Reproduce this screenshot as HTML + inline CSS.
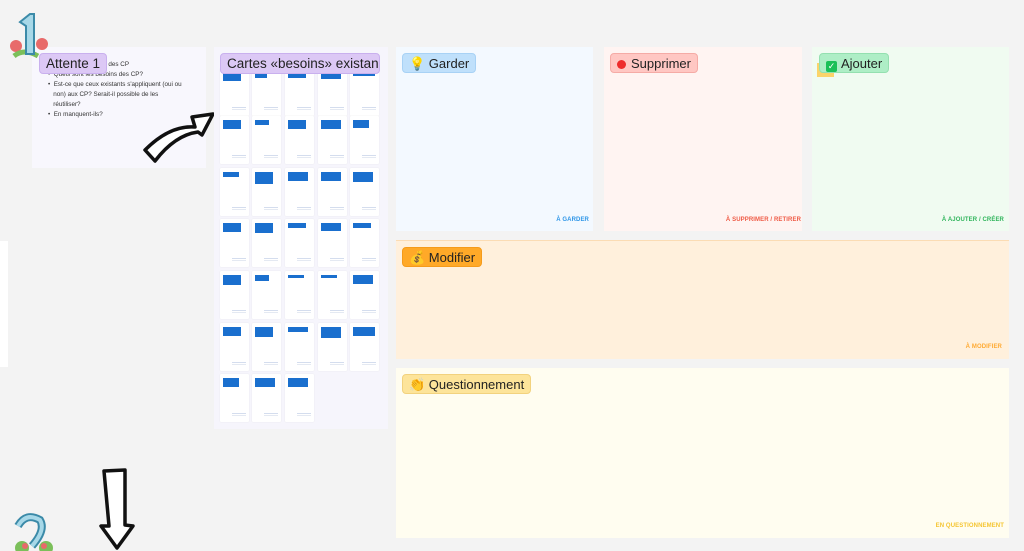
<!DOCTYPE html>
<html><head><meta charset="utf-8"><style>
*{margin:0;padding:0;box-sizing:border-box}
body{width:1024px;height:551px;background:#f3f3f3;position:relative;overflow:hidden;font-family:"Liberation Sans",sans-serif}
.a{position:absolute}
.tag{position:absolute;border-radius:4px;font-size:13px;color:#222;padding:0 6px;height:20px;line-height:20px;white-space:nowrap}
.lbl{position:absolute;font-size:6px;font-weight:bold;right:6px;letter-spacing:.1px}
.card{position:absolute;width:29px;height:48px;background:#fff;border-radius:1px;box-shadow:0 0 1px #ddd}
.card i{position:absolute;left:3px;top:4px;width:18px;height:9px;background:#1a6fce}
.card b{position:absolute;right:3px;bottom:6px;width:14px;height:3px;border-top:1px solid #d4ddee;border-bottom:1px solid #e4e9f2}
</style></head><body>
<div class="a" style="left:32px;top:47px;width:174px;height:121px;background:#f8f7fd"></div>
<div class="a" style="left:48px;top:60px;font-size:6.3px;color:#333;line-height:10px;width:150px">
<div style="padding-left:52px">ns des CP</div>
<div>• &nbsp;Quels sont les besoins des CP?</div>
<div>• &nbsp;Est-ce que ceux existants s'appliquent (oui ou<br>&nbsp;&nbsp;&nbsp;non) aux CP? Serait-il possible de les<br>&nbsp;&nbsp;&nbsp;réutiliser?</div>
<div>• &nbsp;En manquent-ils?</div></div>
<div class="tag" style="left:39px;top:53px;background:#dcc8f5;border:1px solid #c9b0ee;font-size:13.5px;height:21px">Attente 1</div>
<svg class="a" style="left:4px;top:10px" width="46" height="50"><circle cx="12" cy="36" r="6" fill="#e86a6a"/><circle cx="38" cy="34" r="6" fill="#e86a6a"/><path d="M10 46 Q20 38 34 46" stroke="#7bbf5a" stroke-width="5" fill="none"/><path d="M16 12 L26 4 L30 4 L30 44 L22 44 L22 16 Z" fill="#a7d8e8" stroke="#3b8aa8" stroke-width="2"/></svg>
<div class="a" style="left:0;top:241px;width:8px;height:126px;background:#fff"></div>
<svg class="a" style="left:140px;top:105px" width="80" height="62"><path d="M5 45 Q30 20 55 22 L52 12 L73 9 L62 30 L58 27 Q35 30 15 56 Z" fill="#fff" stroke="#111" stroke-width="3.5" stroke-linejoin="round"/></svg>
<svg class="a" style="left:98px;top:468px" width="40" height="83"><path d="M6 3 L27 2 L27 57 L35 58 L19 80 L3 58 L11 58 Z" fill="#fff" stroke="#111" stroke-width="3.5" stroke-linejoin="round"/></svg>
<svg class="a" style="left:6px;top:512px" width="50" height="39"><path d="M12 14 Q20 0 34 8 Q40 18 26 34" stroke="#3b8aa8" stroke-width="8" fill="none"/><path d="M12 14 Q20 0 34 8 Q40 18 26 34" stroke="#a7d8e8" stroke-width="4" fill="none"/><circle cx="16" cy="36" r="7" fill="#7bbf5a"/><circle cx="40" cy="36" r="7" fill="#7bbf5a"/><circle cx="19" cy="34" r="3" fill="#e86a6a"/><circle cx="38" cy="34" r="3" fill="#e86a6a"/></svg>
<div class="a" style="left:214px;top:47px;width:174px;height:382px;background:#f6f5fc"></div>
<div id="cards"></div>
<div class="tag" style="left:220px;top:53px;background:#dcc8f5;border:1px solid #c9b0ee;font-size:13.5px;height:21px;width:160px;overflow:hidden">Cartes «besoins» existan...</div>
<div class="a" style="left:396px;top:47px;width:197px;height:184px;background:#f3f9ff"></div>
<div class="a" style="left:604px;top:47px;width:198px;height:184px;background:#fff4f2"></div>
<div class="a" style="left:812px;top:47px;width:197px;height:184px;background:#f0fbf1"></div>
<div class="lbl" style="top:217px;right:435px;color:#2e96e8">À GARDER</div>
<div class="lbl" style="top:217px;right:223px;color:#ef5a45">À SUPPRIMER / RETIRER</div>
<div class="lbl" style="top:217px;right:20px;color:#30b55c">À AJOUTER / CRÉER</div>
<div class="tag" style="left:402px;top:53px;background:#bfe0fb;border:1px solid #a8d2f5">💡 Garder</div>
<div class="tag" style="left:610px;top:53px;background:#ffc7c3;border:1px solid #f5aba6"><span style="display:inline-block;width:9px;height:9px;border-radius:50%;background:#ee2b2b;vertical-align:-1px;margin-right:5px"></span>Supprimer</div>
<div class="a" style="left:817px;top:63px;width:17px;height:14px;background:#fbd46a"></div>
<div class="tag" style="left:819px;top:53px;background:#aeeec6;border:1px solid #94e0b0"><span style="display:inline-block;width:11px;height:11px;border-radius:2px;background:#1bc058;color:#fff;font-size:9px;line-height:11px;text-align:center;vertical-align:-1px;margin-right:4px">✓</span>Ajouter</div>
<div class="a" style="left:396px;top:240px;width:613px;height:119px;background:#fff0dc;border-top:1px solid #fbdcb4"></div>
<div class="tag" style="left:402px;top:247px;background:#ffa928;border:1px solid #f59b1a">💰 Modifier</div>
<div class="lbl" style="top:344px;right:22px;color:#ffaa33">À MODIFIER</div>
<div class="a" style="left:396px;top:368px;width:613px;height:170px;background:#fffdf0"></div>
<div class="tag" style="left:402px;top:374px;background:#fde49a;border:1px solid #f2d27e">👏 Questionnement</div>
<div class="lbl" style="top:523px;right:20px;color:#f5c531">EN QUESTIONNEMENT</div>
<script>
var xs=[220,252,285,318,350],ys=[68,116,168,219,271,323,374],h='';
var ws=[[18,12,18,20,22],[18,14,18,20,16],[16,18,20,20,20],[18,18,18,20,18],[18,14,16,16,20],[18,18,20,20,22],[16,20,20]];
var hs=[[9,6,6,7,4],[9,5,9,9,8],[5,12,9,9,10],[9,10,5,8,5],[10,6,3,3,9],[9,10,5,11,9],[9,9,9]];
for(var r=0;r<7;r++)for(var c=0;c<(r==6?3:5);c++){h+='<div class="card" style="left:'+xs[c]+'px;top:'+ys[r]+'px"><i style="width:'+ws[r][c]+'px;height:'+hs[r][c]+'px"></i><b></b></div>';}
document.getElementById('cards').innerHTML=h;
</script>
</body></html>
